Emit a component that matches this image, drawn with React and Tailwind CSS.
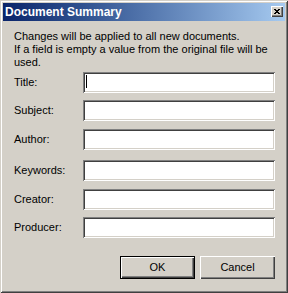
import React from "react";

const font = { fontFamily: '"Liberation Sans", Arial, sans-serif' };

function Field({ label, caret, mt }) {
  return (
    <div className={`flex items-center ${mt}`}>
      <div className="w-[80px] pl-[11px] text-[11px] leading-[13px] text-black">{label}</div>
      <div className="relative h-[21px] w-[192px] bg-white shadow-[inset_1px_1px_#808080,inset_-1px_-1px_#ffffff,inset_2px_2px_#404040,inset_-2px_-2px_#d4d0c8]">
        {caret && <div className="absolute left-[3px] top-[3px] h-[13px] w-[1px] bg-black" />}
      </div>
    </div>
  );
}

export default function App() {
  return (
    <div
      className="w-[288px] h-[293px] bg-[#d4d0c8] p-[3px] flex flex-col shadow-[inset_1px_1px_#d4d0c8,inset_-1px_-1px_#404040,inset_2px_2px_#ffffff,inset_-2px_-2px_#808080]"
      style={font}
    >
      <div className="h-[18px] w-[282px] flex items-center justify-between bg-gradient-to-r from-[#0a246a] to-[#a6caf0] pl-[2px] pr-[2px]">
        <span className="text-white font-bold text-[12px] leading-[14px] pl-[0px]">Document Summary</span>
        <div className="w-[12px] h-[11px] bg-[#d4d0c8] flex items-center justify-center shadow-[inset_1px_1px_#ffffff,inset_-1px_-1px_#404040,inset_-2px_-2px_#808080] -mt-[2px]">
          <svg width="6" height="5" viewBox="0 0 6 5" shapeRendering="crispEdges">
            <path d="M0 0h2v1H0zM4 0h2v1H4zM1 1h4v1H1zM2 2h2v1H2zM1 3h4v1H1zM0 4h2v1H0zM4 4h2v1H4z" fill="#000" />
          </svg>
        </div>
      </div>
      <div className="pl-[11px] pt-[9px] pr-[10px] text-[11px] leading-[13px] text-black">
        <div>Changes will be applied to all new documents.</div>
        <div>If a field is empty a value from the original file will be used.</div>
      </div>
      <Field label="Title:" caret mt="mt-[3px]" />
      <Field label="Subject:" mt="mt-[7px]" />
      <Field label="Author:" mt="mt-[8px]" />
      <Field label="Keywords:" mt="mt-[10px]" />
      <Field label="Creator:" mt="mt-[8px]" />
      <Field label="Producer:" mt="mt-[7px]" />
      <div className="flex justify-end gap-[5px] mt-[18px] pr-[10px]">
        <button className="w-[75px] h-[23px] bg-[#d4d0c8] text-[11px] text-black border border-black shadow-[inset_1px_1px_#ffffff,inset_-1px_-1px_#404040,inset_-2px_-2px_#808080]">
          OK
        </button>
        <button className="w-[75px] h-[23px] bg-[#d4d0c8] text-[11px] text-black shadow-[inset_1px_1px_#ffffff,inset_-1px_-1px_#404040,inset_-2px_-2px_#808080]">
          Cancel
        </button>
      </div>
    </div>
  );
}
